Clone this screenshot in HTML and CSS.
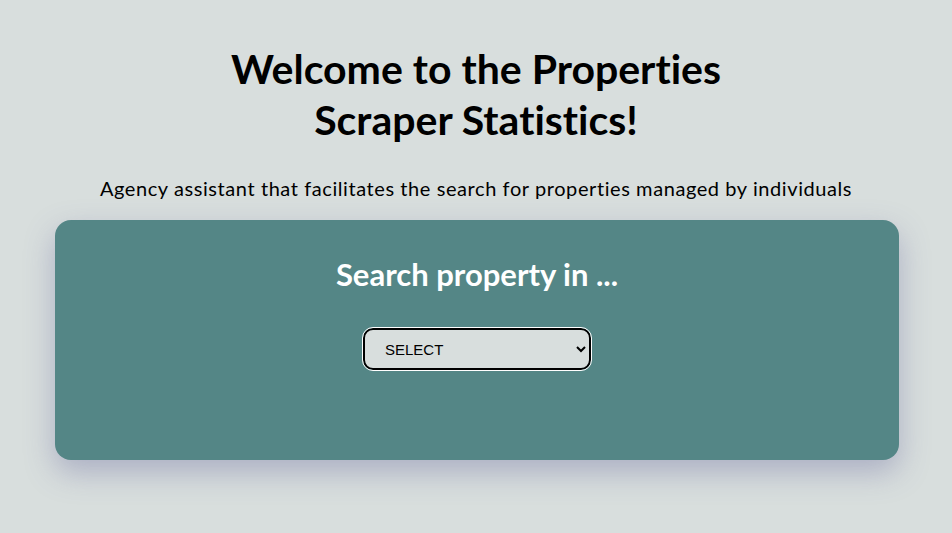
FILE: index.html
```html
<!DOCTYPE html>
<html lang="en">
<head>
<meta charset="utf-8">
<title>Properties Scraper Statistics</title>
<link rel="stylesheet" href="styles.css">
</head>
<body>
<header class="intro">
  <h1 class="title">Welcome to the Properties<br>Scraper Statistics!</h1>
  <p class="subtitle">Agency assistant that facilitates the search for properties managed by individuals</p>
</header>
<main class="card">
  <h2 class="card-title">Search property in ...</h2>
  <select class="picker">
    <option>SELECT</option>
  </select>
</main>
</body>
</html>
```

FILE: styles.css
```css
html, body {
  margin: 0;
  padding: 0;
}
body {
  background: #d8dedd;
  font-family: "Lato", "Open Sans", sans-serif;
  font-variant-ligatures: none;
  color: #000;
  min-height: 533px;
}
.intro {
  display: flex;
  flex-direction: column;
  align-items: center;
  text-align: center;
  padding-top: 43px;
}
.title {
  margin: 0;
  font-size: 41px;
  line-height: 51px;
  font-weight: 700;
}
.subtitle {
  margin: 31px 0 0;
  font-size: 20px;
  letter-spacing: 0.58px;
  line-height: 24px;
}
.card {
  margin: 20px 53px 0 55px;
  height: 240px;
  box-sizing: border-box;
  background: #548686;
  border-radius: 16px;
  box-shadow: 0 12px 30px rgba(90, 90, 150, 0.35);
  display: flex;
  flex-direction: column;
  align-items: center;
  padding-top: 34px;
}
.card-title {
  margin: 0;
  color: #fff;
  font-size: 31px;
  line-height: 40px;
  font-weight: 700;
}
.picker {
  margin-top: 34px;
  width: 228px;
  height: 42px;
  box-sizing: border-box;
  background: #d8dedd;
  border: 2px solid #000;
  border-radius: 10px;
  outline: 1px solid #fff;
  font-family: "Liberation Sans", Arial, sans-serif;
  font-size: 15px;
  padding: 0 0 0 16px;
  color: #000;
}
```
